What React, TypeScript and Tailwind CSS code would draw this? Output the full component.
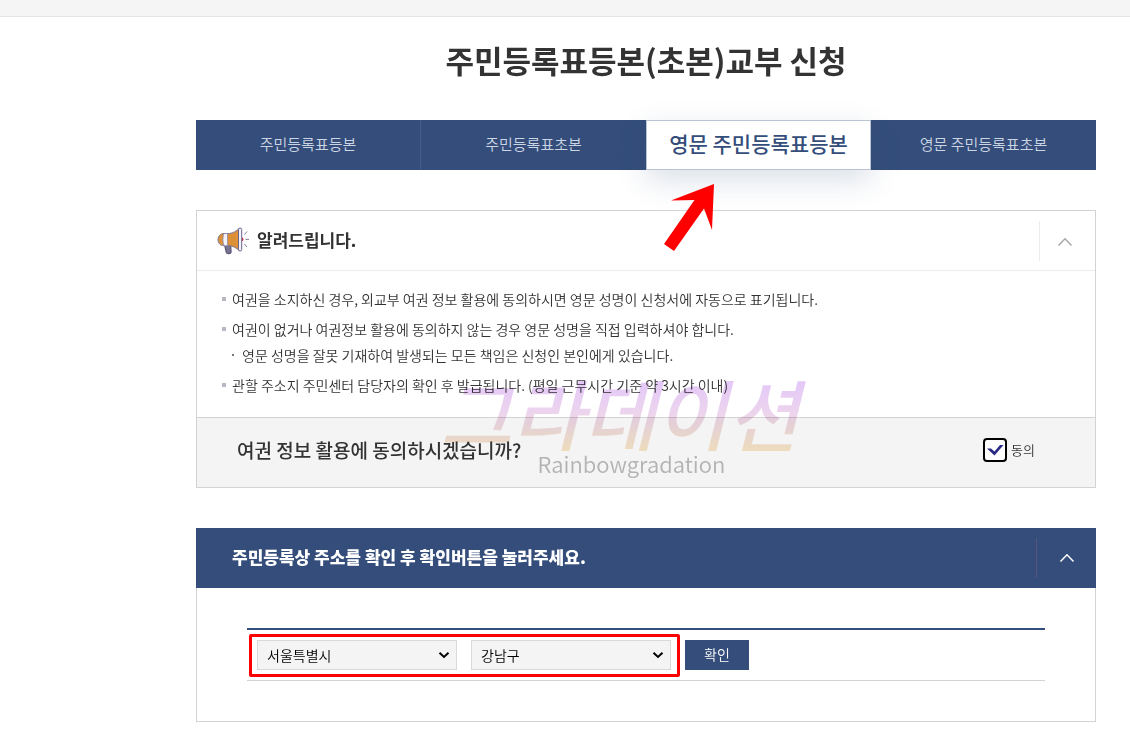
import { useState } from "react";
import clsx from "clsx";

const TABS = [
  "주민등록표등본",
  "주민등록표초본",
  "영문 주민등록표등본",
  "영문 주민등록표초본",
];

const CITIES = ["서울특별시", "부산광역시", "대구광역시", "인천광역시"];
const DISTRICTS = ["강남구", "강동구", "강북구", "강서구"];

const MegaphoneIcon = () => (
  <svg width="32" height="28" viewBox="0 0 32 28" fill="none" aria-hidden="true">
    <path
      d="M7.500 17.500l1.800 7.800c.4 1.800 4.600 1.800 4.800-.2L13.600 17.500z"
      fill="#77748f"
      stroke="#5b5578"
      strokeWidth="1.200"
    />
    <path
      d="M7 6.500h5.500c3.800-.6 6.600-2.200 9.500-4.800v21.600c-2.900-2.600-5.700-4-9.500-4.600H7c-8 0-8-12.200 0-12.200z"
      fill="#dc9137"
      stroke="#7a7296"
    />
    <path d="M7 6.500h3.500v12.200H7c-1.500-3.500-1.500-8.700 0-12.200z" fill="#f4f3fa" stroke="#8d87a8" strokeWidth=".8" />
    <rect x="21.500" y="1" width="3.200" height="23" rx="1.600" fill="#f4f3fa" stroke="#6a6590" />
    <path d="M25 10.500c2 0 2 3.600 0 3.600z" fill="#c23a4c" />
    <path d="M27.500 7.500l2.500-3M28.500 12.400h3.500M27.500 17l2.500 3" stroke="#85819f" />
  </svg>
);

const ChevronUp = ({ className }: { className?: string }) => (
  <svg width="16" height="10" viewBox="0 0 16 10" fill="none" className={className} aria-hidden="true">
    <path d="M1.500 8.500L8 1.800l6.500 6.700" stroke="currentColor" strokeWidth="1.500" />
  </svg>
);

const RegionSelect = ({ label, options }: { label: string; options: string[] }) => (
  <div className="relative">
    <select
      aria-label={label}
      className="block h-[30px] w-[200px] appearance-none border border-[#d9d9d9] bg-[#f4f4f4] pl-[9px] pr-7 text-sm font-[350] text-black"
    >
      {options.map((option) => (
        <option key={option}>{option}</option>
      ))}
    </select>
    <svg
      width="12"
      height="8"
      viewBox="0 0 12 8"
      fill="none"
      className="pointer-events-none absolute right-[7px] top-[11px]"
      aria-hidden="true"
    >
      <path d="M1.500 1.800L6 6l4.500-4.200" stroke="#000" strokeWidth="2" />
    </svg>
  </div>
);

const Bullet = () => <span className="mr-[6px] size-1 shrink-0 bg-[#b4b8c0]" />;

const Watermark = () => (
  <div className="pointer-events-none absolute left-[235px] top-[162px] flex flex-col items-center mix-blend-multiply">
    <span className="bg-linear-to-b from-[#e2c4fa] via-[#ecd4ee] to-[#f8e6c4] bg-clip-text px-2 text-[78px] font-medium italic leading-[78px] text-transparent">
      그라데이션
    </span>
    <span className="pl-6 text-[22px] font-[350] leading-[24px] text-[#bbb]">Rainbowgradation</span>
  </div>
);

export default function App() {
  const [activeTab, setActiveTab] = useState(2);
  const [agreed, setAgreed] = useState(true);

  return (
    <div className="bg-white pb-[26px] font-['Noto_Sans_CJK_KR','Noto_Sans',sans-serif] text-[#333]">
      <div className="h-[17px] border-b border-[#e3e3e8] bg-[#f5f5f5]" />
      <main className="ml-[196px] mr-[34px]">
        <h1 className="pb-9 pt-[19px] text-center text-[31px] font-bold leading-[48px]">
          주민등록표등본(초본)교부 신청
        </h1>

        <nav className="relative z-10 grid h-[50px] grid-cols-4 bg-[#344d7a]">
          {TABS.map((tab, index) => (
            <button
              key={tab}
              type="button"
              onClick={() => setActiveTab(index)}
              className={clsx(
                "pb-[2px]",
                index === activeTab
                  ? "border border-[#b9c3d4] bg-white text-[21px] font-medium text-[#344d7a] shadow-[0_10px_30px_rgba(52,77,122,0.18)]"
                  : "text-[15px] font-[350] text-[#ccd5e4]",
                index === 0 && "border-r border-[#465d89]",
              )}
            >
              {tab}
            </button>
          ))}
          <svg
            width="52"
            height="68"
            viewBox="0 0 52 68"
            className="pointer-events-none absolute left-[467px] top-[64px]"
            aria-hidden="true"
          >
            <path d="M51 0L8 16.500l23.500-.5L1 60l10 7 30-42.500 8 21.500z" fill="#fe0000" />
          </svg>
        </nav>

        <section className="relative mt-10 border border-[#d3d3d3]">
          <div className="flex h-[60px] items-center border-b border-[#ececec] pl-5">
            <MegaphoneIcon />
            <h2 className="ml-2 flex-1 pb-[2px] text-[17px] font-bold">알려드립니다.</h2>
            <button
              type="button"
              aria-label="접기"
              className="flex h-10 w-14 items-center justify-center border-l border-[#ececec] pr-[6px] pt-[2px]"
            >
              <ChevronUp className="text-[#a5a9a9]" />
            </button>
          </div>

          <ul className="flex flex-col gap-1 pb-[19px] pl-[25px] pt-[15px] text-sm font-[350] leading-[26px]">
            <li className="flex items-center">
              <Bullet />
              여권을 소지하신 경우, 외교부 여권 정보 활용에 동의하시면 영문 성명이 신청서에 자동으로
              표기됩니다.
            </li>
            <li>
              <div className="flex items-center">
                <Bullet />
                여권이 없거나 여권정보 활용에 동의하지 않는 경우 영문 성명을 직접 입력하셔야 합니다.
              </div>
              <div className="flex items-center pl-[10px]">
                <span className="mr-2 size-[2px] bg-[#777]" />
                영문 성명을 잘못 기재하여 발생되는 모든 책임은 신청인 본인에게 있습니다.
              </div>
            </li>
            <li className="flex items-center">
              <Bullet />
              관할 주소지 주민센터 담당자의 확인 후 발급됩니다. (평일 근무시간 기준 약 3시간 이내)
            </li>
          </ul>

          <div className="flex h-[70px] items-center justify-between border-t border-[#d3d3d3] bg-[#f4f4f4] pb-1 pl-10 pr-[60px]">
            <p className="text-[19px] font-medium">여권 정보 활용에 동의하시겠습니까?</p>
            <label className="flex items-center gap-1 pb-[2px] text-[13px] font-[350]">
              <span className="relative block size-6">
                <input
                  type="checkbox"
                  checked={agreed}
                  onChange={(e) => setAgreed(e.target.checked)}
                  className="block size-6 appearance-none rounded-[4px] border-2 border-black bg-white"
                />
                {agreed && (
                  <svg
                    width="24"
                    height="24"
                    viewBox="0 0 24 24"
                    className="pointer-events-none absolute inset-0"
                    aria-hidden="true"
                  >
                    <path d="M4 10.500h4l3.500 3L17 7h3.500L11.500 17.500z" fill="#2a2a86" />
                  </svg>
                )}
              </span>
              동의
            </label>
          </div>
          <Watermark />
        </section>

        <section className="mt-10">
          <div className="flex h-[60px] items-center bg-[#344d7a] pl-9 text-white">
            <h2 className="flex-1 pb-[2px] text-[17px] font-black">
              주민등록상 주소를 확인 후 확인버튼을 눌러주세요.
            </h2>
            <button
              type="button"
              aria-label="접기"
              className="flex h-10 w-[60px] items-center justify-center border-l border-[#54547f]"
            >
              <ChevronUp />
            </button>
          </div>
          <div className="border border-t-0 border-[#d3d3d3] px-[50px] py-10">
            <form
              onSubmit={(e) => e.preventDefault()}
              className="flex items-center gap-[14px] border-b border-t-2 border-b-[#d3d3d3] border-t-[#344d7a] px-[10px] py-[10px]"
            >
              <div className="relative flex gap-[14px]">
                <RegionSelect label="시도" options={CITIES} />
                <RegionSelect label="시군구" options={DISTRICTS} />
                <div className="pointer-events-none absolute -bottom-[7px] -left-2 -right-[9px] -top-[6px] rounded-[2px] border-3 border-[#fe0000]" />
              </div>
              <button type="submit" className="h-[30px] w-16 bg-[#344d7a] pb-[2px] text-sm font-[350] text-white">
                확인
              </button>
            </form>
          </div>
        </section>
      </main>
    </div>
  );
}
